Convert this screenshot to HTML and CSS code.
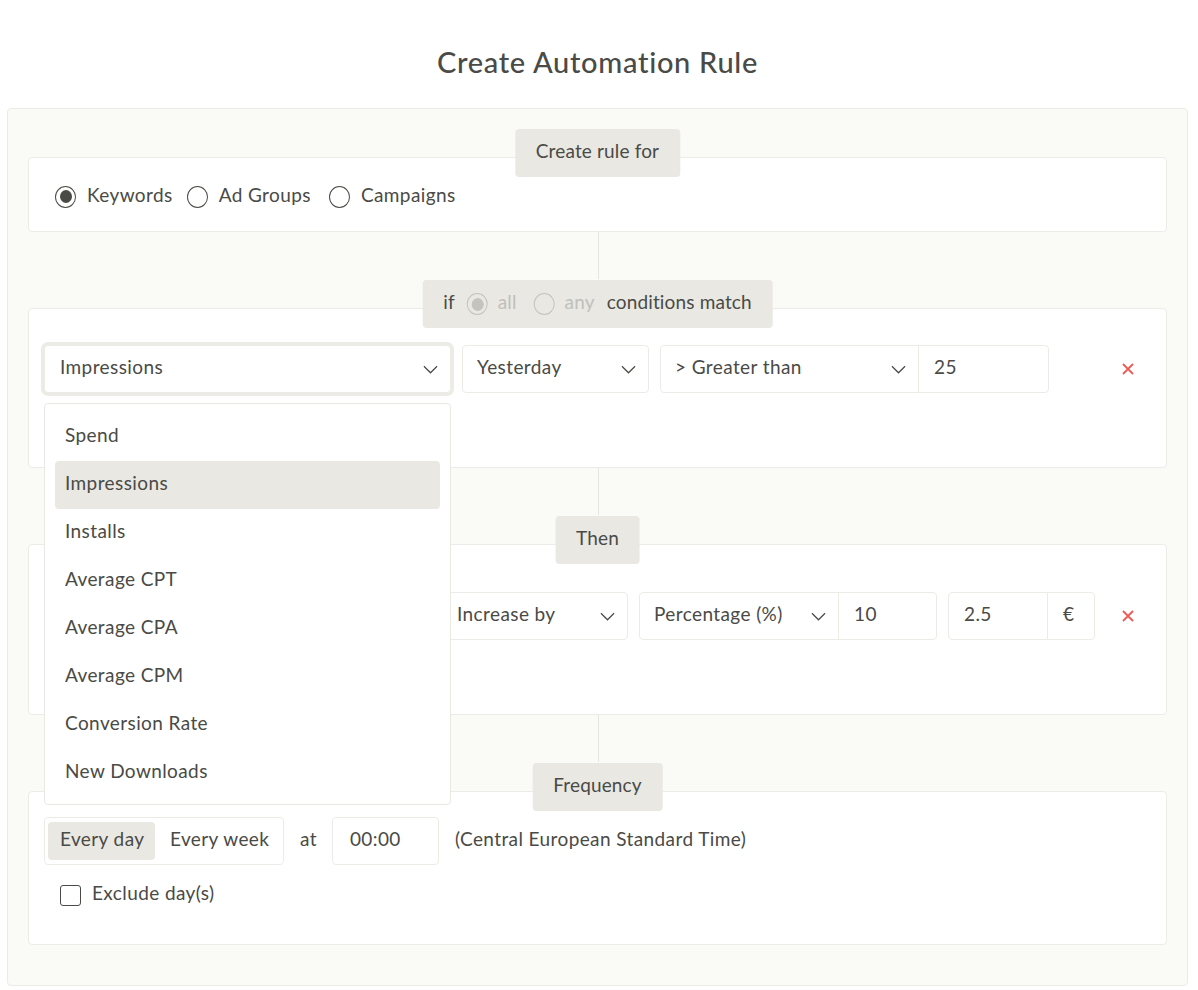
FILE: index.html
```html
<!DOCTYPE html>
<html lang="en">
<head>
<meta charset="utf-8">
<title>Create Automation Rule</title>
<link rel="stylesheet" href="styles.css">
</head>
<body>
<h1 class="title">Create Automation Rule</h1>
<main class="panel">
  <section class="section section-target link">
    <div class="tag"><span>Create rule for</span></div>
    <div class="radios">
      <span class="radio on"></span><span class="radio-text r1">Keywords</span>
      <span class="radio"></span><span class="radio-text r2">Ad Groups</span>
      <span class="radio"></span><span class="radio-text">Campaigns</span>
    </div>
  </section>
  <section class="section section-if link">
    <div class="tag tag-if">
      <span>if</span>
      <span class="radio on muted"></span><span class="dim">all</span>
      <span class="radio muted"></span><span class="dim dim-last">any</span>
      <span>conditions match</span>
    </div>
    <div class="row">
      <div class="select-wrap">
        <div class="box select focus w-metric"><span>Impressions</span><svg class="chev" viewBox="0 0 16 9"><path d="M1 1l7 7 7-7"/></svg></div>
        <ul class="menu">
          <li>Spend</li>
          <li class="active">Impressions</li>
          <li>Installs</li>
          <li>Average CPT</li>
          <li>Average CPA</li>
          <li>Average CPM</li>
          <li>Conversion Rate</li>
          <li>New Downloads</li>
        </ul>
      </div>
      <div class="box select w-yesterday"><span>Yesterday</span><svg class="chev" viewBox="0 0 16 9"><path d="M1 1l7 7 7-7"/></svg></div>
      <div class="group">
        <div class="box select w-greater"><span>&gt; Greater than</span><svg class="chev" viewBox="0 0 16 9"><path d="M1 1l7 7 7-7"/></svg></div>
        <div class="box field w-25"><span>25</span></div>
      </div>
      <svg class="del" viewBox="0 0 12 12"><path d="M1 1l10 10M11 1L1 11"/></svg>
    </div>
  </section>
  <section class="section section-then link">
    <div class="tag"><span>Then</span></div>
    <div class="row">
      <div class="box w-hidden"></div>
      <div class="box select w-increase"><span>Increase by</span><svg class="chev" viewBox="0 0 16 9"><path d="M1 1l7 7 7-7"/></svg></div>
      <div class="group">
        <div class="box select w-percent"><span>Percentage (%)</span><svg class="chev" viewBox="0 0 16 9"><path d="M1 1l7 7 7-7"/></svg></div>
        <div class="box field w-10"><span>10</span></div>
      </div>
      <div class="group">
        <div class="box field w-25b"><span>2.5</span></div>
        <div class="box field w-euro"><span>€</span></div>
      </div>
      <svg class="del" viewBox="0 0 12 12"><path d="M1 1l10 10M11 1L1 11"/></svg>
    </div>
  </section>
  <section class="section section-freq">
    <div class="tag"><span>Frequency</span></div>
    <div class="row row-freq">
      <div class="box segmented"><span class="seg on">Every day</span><span class="seg">Every week</span></div>
      <span class="at">at</span>
      <div class="box field w-time"><span>00:00</span></div>
      <span class="tz">(Central European Standard Time)</span>
    </div>
    <div class="exclude"><span class="check"></span><span class="ex-text">Exclude day(s)</span></div>
  </section>
</main>
</body>
</html>
```
FILE: styles.css
```css
* { box-sizing: border-box; }
html, body { margin: 0; padding: 0; }
body {
  background: #fff;
  color: #4a4a46;
  font-family: Lato, "Noto Sans", sans-serif;
  font-size: 19px;
  letter-spacing: 0.4px;
  line-height: 24px;
  height: 990px;
  overflow: hidden;
}
.title {
  margin: 0;
  height: 108px;
  padding: 44px 3px 0 0;
  text-align: center;
  font-size: 29px;
  letter-spacing: 0.7px;
  line-height: 36px;
  font-weight: 500;
  color: #4a4a46;
}
.panel {
  margin: 0 10px 0 7px;
  height: 878px;
  padding: 48px 20px 0;
  background: #fafaf6;
  border: 1px solid #ecece7;
  border-radius: 4px;
}
.section {
  position: relative;
  background: #fff;
  border: 1px solid #ecece7;
  border-radius: 4px;
  padding: 0 15px;
  margin-bottom: 76px;
}
.link::after {
  content: "";
  position: absolute;
  left: 569px;
  top: 100%;
  width: 1px;
  height: 48px;
  background: #e6e6e1;
}
.section-target { height: 75px; }
.section-if { height: 160px; padding-top: 36px; }
.section-then { height: 171px; padding-top: 47px; }
.section-freq { height: 154px; padding-top: 25px; margin-bottom: 0; }
.tag {
  position: absolute;
  top: -29px;
  left: 50%;
  transform: translateX(-50%);
  height: 48px;
  padding: 0 21px;
  display: flex;
  align-items: center;
  background: #e9e8e3;
  border-radius: 4px;
  letter-spacing: 0.15px;
  white-space: nowrap;
  z-index: 2;
}
.tag > span:not(.radio),
.box > span:not(.seg),
.radio-text,
.at,
.tz,
.ex-text { padding-bottom: 4px; }
.radios {
  display: flex;
  align-items: center;
  height: 78px;
  padding: 0 0 1px 11px;
}
.radio {
  flex: none;
  width: 21px;
  height: 22px;
  border: 1.5px solid #4a4a46;
  border-radius: 50%;
  background: #fff;
  position: relative;
}
.radio.on::after {
  content: "";
  position: absolute;
  inset: 3.5px;
  border-radius: 50%;
  background: #4a4a46;
}
.radio-text { margin-left: 11px; }
.r1 { margin-right: 14px; }
.r2 { margin-right: 18px; }
.radio.muted { border-color: #c4c4bf; background: transparent; }
.radio.muted.on::after { background: #c4c4bf; }
.tag-if .radio { margin: 0 10px 0 12px; }
.tag-if .dim { color: #c0c0ba; }
.tag-if .dim + .radio { margin-left: 17px; }
.tag-if .dim-last { margin-right: 12px; }
.row {
  display: flex;
  align-items: center;
  gap: 11px;
  position: relative;
}
.box {
  height: 48px;
  background: #fff;
  border: 1px solid #ecece7;
  border-radius: 4px;
  display: flex;
  align-items: center;
  padding: 0 15px;
}
.select { justify-content: space-between; padding-right: 12px; }
.chev {
  flex: none;
  width: 15px;
  height: 9px;
  fill: none;
  stroke: #4a4a46;
  stroke-width: 1.3;
}
.focus { box-shadow: 0 0 0 3px #ecebe6; }
.select-wrap { position: relative; }
.w-metric { width: 407px; }
.w-yesterday { width: 187px; padding-left: 14px; }
.w-greater { width: 259px; padding-left: 14px; border-radius: 4px 0 0 4px; }
.w-25 { width: 131px; margin-left: -1px; border-radius: 0 4px 4px 0; }
.w-hidden { width: 386px; }
.w-increase { width: 187px; }
.w-percent { width: 200px; padding-left: 14px; border-radius: 4px 0 0 4px; }
.w-10 { width: 99px; margin-left: -1px; border-radius: 0 4px 4px 0; }
.w-25b { width: 100px; border-radius: 4px 0 0 4px; }
.w-euro { width: 48px; margin-left: -1px; border-radius: 0 4px 4px 0; }
.group { display: flex; }
.del {
  position: absolute;
  left: 1078px;
  top: 18px;
  width: 12px;
  height: 12px;
  fill: none;
  stroke: #ee5a55;
  stroke-width: 1.8;
}
.menu {
  position: absolute;
  z-index: 10;
  left: 0;
  top: 58px;
  width: 407px;
  height: 402px;
  margin: 0;
  padding: 9px 10px;
  list-style: none;
  background: #fff;
  border: 1px solid #e9e9e4;
  border-radius: 4px;
}
.menu li {
  height: 48px;
  line-height: 43px;
  padding: 0 10px;
  border-radius: 4px;
}
.menu li.active { background: #e9e8e3; }
.row-freq { gap: 0; }
.segmented { width: 240px; padding: 0 3px; gap: 0; }
.seg {
  height: 38px;
  line-height: 34px;
  padding: 0 12px;
  border-radius: 4px;
  white-space: nowrap;
}
.seg.on { width: 107px; background: #e9e8e3; margin-right: 3px; }
.at { margin: 0 15px 0 16px; }
.w-time { width: 107px; padding-left: 17px; }
.tz { margin-left: 16px; }
.exclude {
  display: flex;
  align-items: center;
  margin: 16px 0 0 16px;
  gap: 11px;
}
.check {
  width: 21px;
  height: 21px;
  border: 1.5px solid #4a4a46;
  border-radius: 3px;
  background: #fff;
}
```
